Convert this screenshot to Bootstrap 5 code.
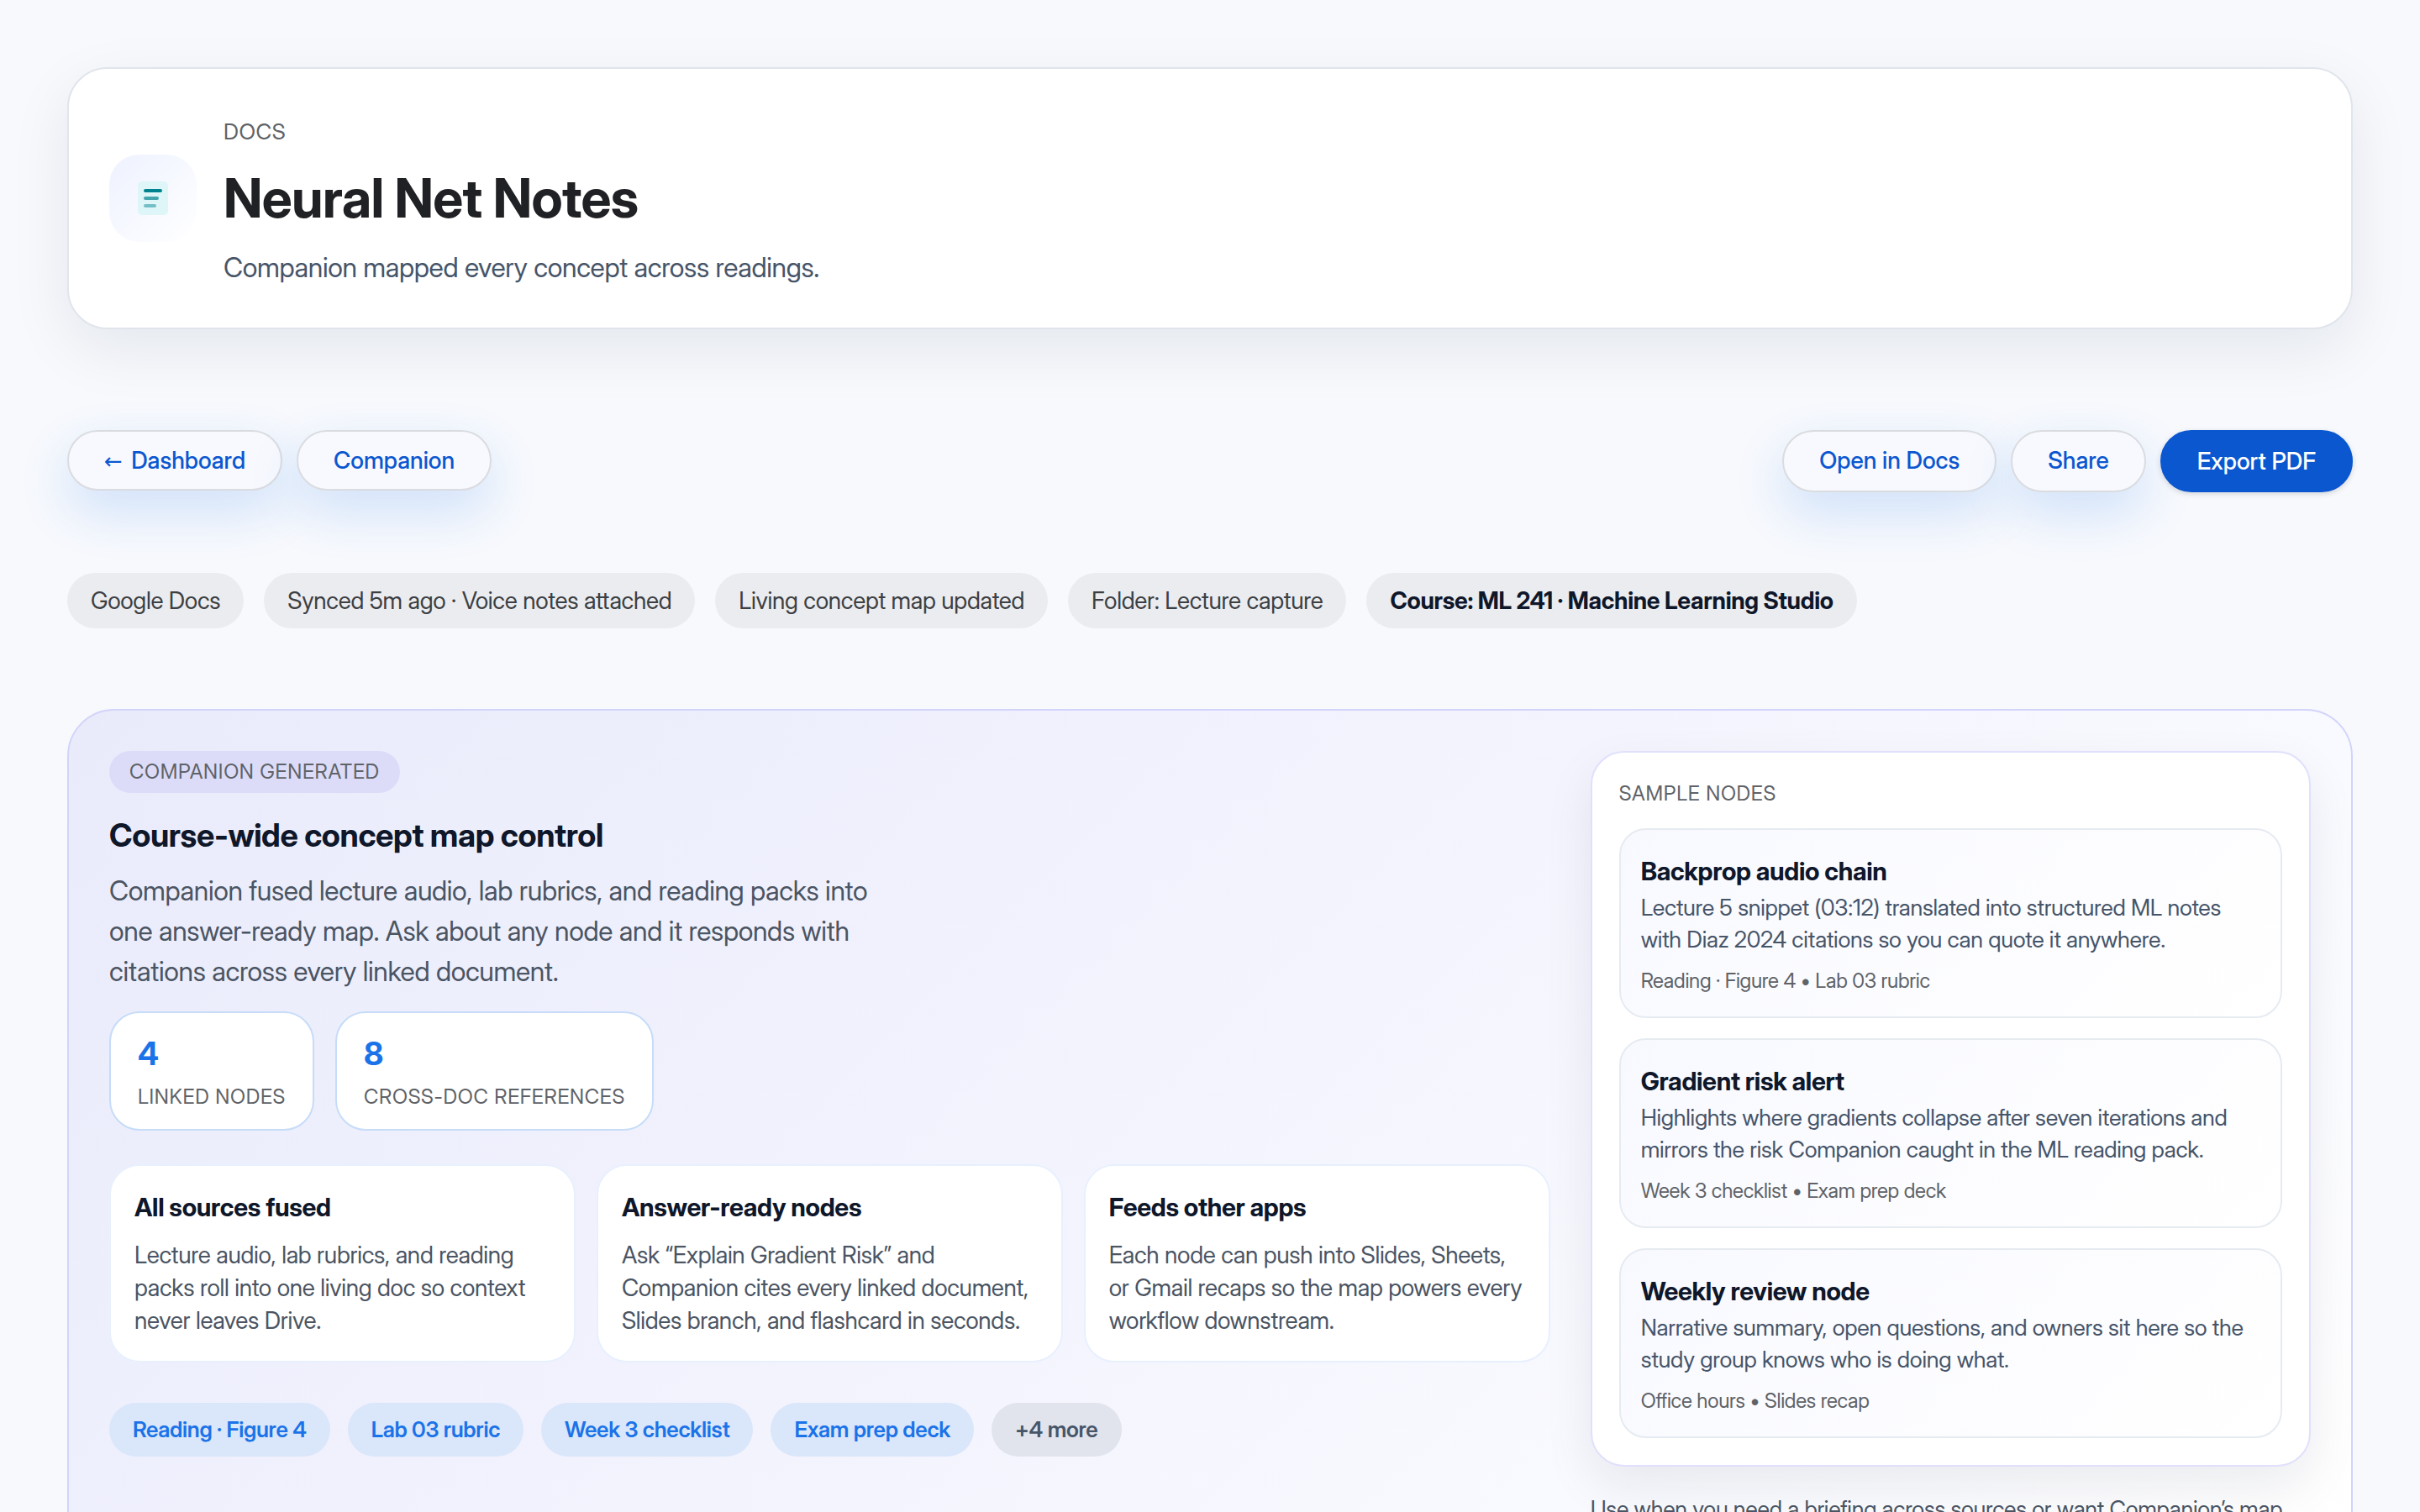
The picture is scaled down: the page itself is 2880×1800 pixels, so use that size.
<!DOCTYPE html>
<html lang="en">
<head>
<meta charset="utf-8">
<meta name="viewport" content="width=device-width, initial-scale=1">
<title>Neural Net Notes</title>
<link href="https://cdn.jsdelivr.net/npm/bootstrap@5.3.0/dist/css/bootstrap.min.css" rel="stylesheet">
<style>
  body { font-family: "Inter Display", "Inter Tight", Inter, "Liberation Sans", sans-serif; font-size: 28px; line-height: 1.5; color: #202124; background: #f7f9fd; }
  body, body * { letter-spacing: -0.01em; }
  .page { padding: 80px; }
  h1, h2, h3, p { margin: 0; }
  .page .eyebrow { font-size: 24px; line-height: 34px; letter-spacing: 0.03em; text-transform: uppercase; color: #5f6368; }

  .doc-header { padding: 48px; gap: 32px; border: 2px solid #e0e5ec; border-radius: 48px; background: #fff; box-shadow: 0 24px 72px rgba(15, 23, 42, .08); }
  .doc-icon { width: 104px; height: 104px; border-radius: 36px; background: linear-gradient(135deg, #eef2ff, #fff); }
  .page .doc-header .eyebrow { font-size: 26px; line-height: 54px; letter-spacing: 0.02em; }
  .doc-title { font-size: 64px; line-height: 84px; font-weight: 700; margin: 10px 0 18px; }
  .doc-sub { font-size: 32px; line-height: 46px; color: #475569; }

  .toolbar { margin-top: 120px; }
  .pill-gap { gap: 17px; }
  .page .pill-btn { --bs-btn-font-size: 28px; --bs-btn-line-height: 36px; --bs-btn-font-weight: 500; --bs-btn-padding-x: 42px; --bs-btn-padding-y: 16px; --bs-btn-border-width: 2px; --bs-btn-border-radius: 999px; letter-spacing: normal;
    --bs-btn-color: #0b57d0; --bs-btn-bg: #f8f9fe; --bs-btn-border-color: #dadce0; --bs-btn-hover-color: #0b57d0; --bs-btn-hover-bg: #eef3fd; --bs-btn-hover-border-color: #dadce0; box-shadow: 0 24px 60px rgba(26, 115, 232, .18); }
  .page .pill-btn.solid { --bs-btn-color: #fff; --bs-btn-bg: #0b57d0; --bs-btn-border-color: #0b57d0; --bs-btn-line-height: 38px; --bs-btn-hover-color: #fff; --bs-btn-hover-bg: #0a4bb5; box-shadow: 0 2px 6px rgba(60, 64, 67, .2); }
  .back-arrow { font-family: "DejaVu Sans", sans-serif; font-size: 26px; line-height: 1; font-weight: 400; margin-right: 4px; }

  .meta-row { margin-top: 96px; gap: 24px; }
  .meta-chip { padding: 12px 28px; border-radius: 999px; background: #ebecf0; color: #3c4043; line-height: 42px; }
  .meta-chip.course { color: #0f172a; font-weight: 700; }

  .panel { margin-top: 96px; padding: 48px; gap: 48px; grid-template-columns: minmax(0, 2fr) minmax(0, 1fr); align-items: start; border: 2px solid #d3d4fa; border-radius: 56px; background: linear-gradient(135deg, #e9ebfb, #f4f4fe 50%, #fafbff 78%, #fff); }
  .generated { padding: 8px 24px; border-radius: 999px; background: #dcdcf9; }
  .panel-title { margin-top: 23px; font-size: 38px; line-height: 54px; font-weight: 700; color: #0f172a; }
  .panel-text { margin-top: 16px; max-width: 920px; font-size: 32px; line-height: 48px; color: #4b5563; }
  .stats { margin-top: 23px; gap: 25px; }
  .stat { padding: 24px 32px 22px; border: 2px solid #c6dcf8; border-radius: 36px; background: #fff; }
  .stat-value { font-size: 38px; line-height: 48px; font-weight: 700; color: #1a73e8; }
  .page .stat .eyebrow { margin-top: 12px; line-height: 32px; }
  .features { margin-top: 40px; gap: 25px; }
  .feature { flex: 1 1 0; padding: 28px; border: 2px solid #e8f0fe; border-radius: 36px; background: #fff; }
  .item-title { font-size: 30px; line-height: 42px; font-weight: 700; color: #0f172a; }
  .feature p { margin-top: 17px; font-size: 28px; line-height: 39px; color: #4b5563; }
  .refs { margin-top: 48px; gap: 21px; }
  .ref-chip { padding: 12px 28px; border-radius: 999px; background: #dae6fa; color: #1a73e8; font-size: 26px; line-height: 40px; font-weight: 600; }
  .ref-chip.more { background: #e1e4ed; color: #475569; }

  .samples { padding: 32px; gap: 24px; border: 2px solid #e0e0fd; border-radius: 40px; background: #fff; box-shadow: 0 24px 60px rgba(15, 23, 42, .08); }
  .node { padding: 24px; border: 2px solid #e6ebf2; border-radius: 32px; background: linear-gradient(135deg, #f8f9ff, #fff); }
  .node .item-title { line-height: 50px; }
  .node-text { font-size: 27px; line-height: 38px; color: #475569; }
  .node-meta { margin-top: 12px; font-size: 24px; line-height: 36px; color: #5f6368; }
  .usage { margin-top: 30px; font-size: 27px; line-height: 42px; color: #4b5563; }
</style>
</head>
<body>
<main class="page">
  <header class="doc-header d-flex align-items-center">
    <div class="doc-icon d-flex align-items-center justify-content-center flex-shrink-0">
      <svg width="36" height="40" viewBox="0 0 36 40" aria-hidden="true">
        <rect width="36" height="40" rx="5" fill="#def6f8"/>
        <rect x="7" y="9" width="22" height="4" rx="2" fill="#00838f"/>
        <rect x="7" y="18" width="18" height="4" rx="2" fill="#44a5ae"/>
        <rect x="7" y="27" width="15" height="4" rx="2" fill="#74bfc7"/>
      </svg>
    </div>
    <div>
      <div class="eyebrow">Docs</div>
      <h1 class="doc-title">Neural Net Notes</h1>
      <p class="doc-sub">Companion mapped every concept across readings.</p>
    </div>
  </header>

  <nav class="toolbar d-flex justify-content-between align-items-start" aria-label="Document actions">
    <div class="d-flex pill-gap">
      <a class="btn pill-btn" href="#dashboard"><span class="back-arrow">←</span> Dashboard</a>
      <a class="btn pill-btn" href="#companion">Companion</a>
    </div>
    <div class="d-flex pill-gap">
      <a class="btn pill-btn" href="#docs">Open in Docs</a>
      <a class="btn pill-btn" href="#share">Share</a>
      <button class="btn pill-btn solid" type="button">Export PDF</button>
    </div>
  </nav>

  <div class="meta-row d-flex flex-wrap">
    <span class="meta-chip">Google Docs</span>
    <span class="meta-chip">Synced 5m ago · Voice notes attached</span>
    <span class="meta-chip">Living concept map updated</span>
    <span class="meta-chip">Folder: Lecture capture</span>
    <span class="meta-chip course">Course: ML 241 · Machine Learning Studio</span>
  </div>

  <section class="panel d-grid">
    <div>
      <div class="d-flex"><span class="eyebrow generated">Companion generated</span></div>
      <h2 class="panel-title">Course-wide concept map control</h2>
      <p class="panel-text">Companion fused lecture audio, lab rubrics, and reading packs into one answer-ready map. Ask about any node and it responds with citations across every linked document.</p>
      <div class="stats d-flex">
        <div class="stat"><div class="stat-value">4</div><div class="eyebrow">Linked nodes</div></div>
        <div class="stat"><div class="stat-value">8</div><div class="eyebrow">Cross-doc references</div></div>
      </div>
      <div class="features d-flex">
        <article class="feature">
          <h3 class="item-title">All sources fused</h3>
          <p>Lecture audio, lab rubrics, and reading packs roll into one living doc so context never leaves Drive.</p>
        </article>
        <article class="feature">
          <h3 class="item-title">Answer-ready nodes</h3>
          <p>Ask “Explain Gradient Risk” and Companion cites every linked document, Slides branch, and flashcard in seconds.</p>
        </article>
        <article class="feature">
          <h3 class="item-title">Feeds other apps</h3>
          <p>Each node can push into Slides, Sheets, or Gmail recaps so the map powers every workflow downstream.</p>
        </article>
      </div>
      <div class="refs d-flex flex-wrap">
        <span class="ref-chip">Reading · Figure 4</span>
        <span class="ref-chip">Lab 03 rubric</span>
        <span class="ref-chip">Week 3 checklist</span>
        <span class="ref-chip">Exam prep deck</span>
        <span class="ref-chip more">+4 more</span>
      </div>
    </div>

    <aside>
      <div class="samples d-flex flex-column">
        <div class="eyebrow">Sample nodes</div>
        <article class="node">
          <h3 class="item-title">Backprop audio chain</h3>
          <p class="node-text">Lecture 5 snippet (03:12) translated into structured ML notes with Diaz 2024 citations so you can quote it anywhere.</p>
          <p class="node-meta">Reading · Figure 4 • Lab 03 rubric</p>
        </article>
        <article class="node">
          <h3 class="item-title">Gradient risk alert</h3>
          <p class="node-text">Highlights where gradients collapse after seven iterations and mirrors the risk Companion caught in the ML reading pack.</p>
          <p class="node-meta">Week 3 checklist • Exam prep deck</p>
        </article>
        <article class="node">
          <h3 class="item-title">Weekly review node</h3>
          <p class="node-text">Narrative summary, open questions, and owners sit here so the study group knows who is doing what.</p>
          <p class="node-meta">Office hours • Slides recap</p>
        </article>
      </div>
      <p class="usage">Use when you need a briefing across sources or want Companion’s map</p>
    </aside>
  </section>
</main>
<script src="https://cdn.jsdelivr.net/npm/bootstrap@5.3.0/dist/js/bootstrap.bundle.min.js"></script>
</body>
</html>
